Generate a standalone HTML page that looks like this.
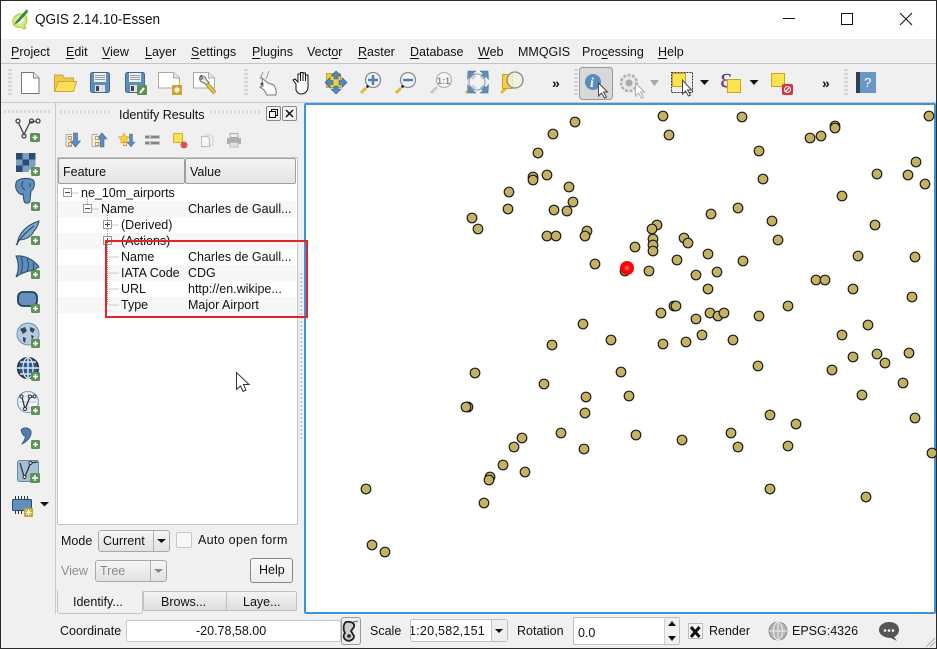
<!DOCTYPE html>
<html><head><meta charset="utf-8"><style>
html,body{margin:0;padding:0}
body{width:937px;height:649px;overflow:hidden;position:relative;background:#f0f0f0;font:12.5px "Liberation Sans",sans-serif;color:#111}
.t{position:absolute;white-space:nowrap;line-height:16px}
.b{position:absolute;box-sizing:border-box}
u{text-decoration-thickness:1px;text-underline-offset:2px}
.r{position:absolute;left:58px;width:238px;height:16px}
.btn{position:absolute;box-sizing:border-box;border:1px solid #a8a8a8;border-radius:3px;background:linear-gradient(#f6f6f6,#e2e2e2)}
svg{position:absolute;left:0;top:0}
</style></head><body>
<div class="b" style="left:0;top:0;width:937px;height:39px;background:#fff"></div>
<div class="t" style="left:35px;top:11px;font-size:14.5px;line-height:18px;transform:scaleX(.935);transform-origin:0 0">QGIS 2.14.10-Essen</div>
<div class="t" style="left:11px;top:44px"><u>P</u>roject</div>
<div class="t" style="left:66px;top:44px"><u>E</u>dit</div>
<div class="t" style="left:102px;top:44px"><u>V</u>iew</div>
<div class="t" style="left:145px;top:44px"><u>L</u>ayer</div>
<div class="t" style="left:191px;top:44px"><u>S</u>ettings</div>
<div class="t" style="left:252px;top:44px"><u>P</u>lugins</div>
<div class="t" style="left:307px;top:44px">Vect<u>o</u>r</div>
<div class="t" style="left:358px;top:44px"><u>R</u>aster</div>
<div class="t" style="left:410px;top:44px"><u>D</u>atabase</div>
<div class="t" style="left:478px;top:44px"><u>W</u>eb</div>
<div class="t" style="left:518px;top:44px">MMQGIS</div>
<div class="t" style="left:582px;top:44px">Pro<u>c</u>essing</div>
<div class="t" style="left:658px;top:44px"><u>H</u>elp</div>
<div class="b" style="left:0;top:63px;width:937px;height:1px;background:#c4c4c4"></div>
<div class="b" style="left:0;top:102px;width:937px;height:1px;background:#c8c8c8"></div>
<div class="b" style="left:55px;top:103px;width:1px;height:511px;background:#cacaca"></div>

<!-- dock -->
<div class="t" style="left:119px;top:107px">Identify Results</div>
<div class="b" style="left:266px;top:106px;width:15px;height:15px;border:1px solid #888;border-radius:2px;background:#f4f4f4"></div>
<div class="b" style="left:282px;top:106px;width:15px;height:15px;border:1px solid #888;border-radius:2px;background:#f4f4f4"></div>
<div class="b" style="left:57px;top:157px;width:241px;height:368px;background:#fff;border:1px solid #c4c4c4;border-radius:2px"></div>
<div class="b" style="left:58px;top:158px;width:127px;height:26px;background:linear-gradient(#f4f4f4,#e4e4e4);border:1px solid #a0a0a0;border-radius:2px"></div>
<div class="b" style="left:185px;top:158px;width:111px;height:26px;background:linear-gradient(#f4f4f4,#e4e4e4);border:1px solid #a0a0a0;border-radius:2px"></div>
<div class="t" style="left:63px;top:164px">Feature</div>
<div class="t" style="left:190px;top:164px">Value</div>
<div class="r" style="top:201px;background:#f7f7f7"></div>
<div class="r" style="top:233px;background:#f7f7f7"></div>
<div class="r" style="top:265px;background:#f7f7f7"></div>
<div class="r" style="top:297px;background:#f7f7f7"></div>
<div class="t" style="left:81px;top:185px">ne_10m_airports</div>
<div class="t" style="left:101px;top:201px">Name</div>
<div class="t" style="left:188px;top:201px">Charles de Gaull...</div>
<div class="t" style="left:121px;top:217px">(Derived)</div>
<div class="t" style="left:121px;top:233px">(Actions)</div>
<div class="t" style="left:121px;top:249px">Name</div>
<div class="t" style="left:188px;top:249px">Charles de Gaull...</div>
<div class="t" style="left:121px;top:265px">IATA Code</div>
<div class="t" style="left:188px;top:265px">CDG</div>
<div class="t" style="left:121px;top:281px">URL</div>
<div class="t" style="left:188px;top:281px">http://en.wikipe...</div>
<div class="t" style="left:121px;top:297px">Type</div>
<div class="t" style="left:188px;top:297px">Major Airport</div>

<div class="t" style="left:61px;top:533px">Mode</div>
<div class="btn" style="left:98px;top:530px;width:72px;height:22px"></div>
<div class="t" style="left:103px;top:533px">Current</div>
<div class="b" style="left:153px;top:531px;width:1px;height:20px;background:#b0b0b0"></div>
<div class="b" style="left:176px;top:532px;width:16px;height:16px;border:1px solid #c8c8c8;border-radius:2px;background:#f6f6f6"></div>
<div class="t" style="left:198px;top:532px;letter-spacing:.3px">Auto open form</div>
<div class="t" style="left:61px;top:563px;color:#8c8c8c">View</div>
<div class="btn" style="left:95px;top:560px;width:72px;height:22px"></div>
<div class="t" style="left:100px;top:563px;color:#8c8c8c">Tree</div>
<div class="b" style="left:150px;top:561px;width:1px;height:20px;background:#b0b0b0"></div>
<div class="btn" style="left:250px;top:558px;width:43px;height:25px;border-color:#888;background:linear-gradient(#f8f8f8,#ececec)"></div>
<div class="t" style="left:259px;top:562px">Help</div>
<div class="b" style="left:143px;top:591px;width:154px;height:20px;background:linear-gradient(#f4f4f4,#dedede);border:1px solid #c0c0c0;border-radius:2px"></div>
<div class="b" style="left:226px;top:591px;width:1px;height:20px;background:#c0c0c0"></div>
<div class="b" style="left:57px;top:590px;width:86px;height:24px;background:#f0f0f0;border:1px solid #c4c4c4;border-top:0;border-radius:0 0 3px 3px"></div>
<div class="t" style="left:73px;top:594px">Identify...</div>
<div class="t" style="left:161px;top:594px">Brows...</div>
<div class="t" style="left:243px;top:594px">Laye...</div>

<!-- map -->
<div class="b" style="left:304px;top:103px;width:632px;height:511px;background:#fff;border:2px solid #3d93e0;border-radius:2px"></div>

<!-- status -->
<div class="t" style="left:60px;top:623px">Coordinate</div>
<div class="b" style="left:126px;top:620px;width:215px;height:22px;background:#fff;border:1px solid #c8c8c8;border-radius:2px"></div>
<div class="t" style="left:196px;top:623px">-20.78,58.00</div>
<div class="b" style="left:341px;top:617px;width:20px;height:28px;background:#eee;border:1px solid #999;border-radius:3px"></div>
<div class="t" style="left:370px;top:623px">Scale</div>
<div class="btn" style="left:410px;top:619px;width:98px;height:23px;background:#fff;border-color:#c0c0c0"></div>
<div class="b" style="left:411px;top:620px;width:80px;height:21px;overflow:hidden"><div class="t" style="left:-2px;top:3px;letter-spacing:.25px">1:20,582,151</div></div>
<div class="b" style="left:491px;top:620px;width:16px;height:21px;background:#eee;border-left:1px solid #c0c0c0"></div>
<div class="t" style="left:517px;top:623px">Rotation</div>
<div class="b" style="left:573px;top:617px;width:107px;height:28px;background:#fff;border:1px solid #c0c0c0;border-radius:2px"></div>
<div class="t" style="left:578px;top:625px">0.0</div>
<div class="b" style="left:664px;top:618px;width:15px;height:26px;background:#f0f0f0;border-left:1px solid #d0d0d0"></div>
<div class="t" style="left:709px;top:623px">Render</div>
<div class="t" style="left:792px;top:623px">EPSG:4326</div>

<svg width="937" height="649" viewBox="0 0 937 649">
<!-- logo -->
<path d="M19 14c4-1 8 1 8 6 0 3-1 5-3 6l2 2-2 1-3-2c-3 1-7 0-8-4-1-4 2-8 6-9z" fill="#d6e77f" stroke="#a9c640"/><circle cx="20" cy="20" r="3.500" fill="#fff"/><path d="M27 9l-10 11-3 5 5-3 9-10z" fill="#2e8b3a"/>
<!-- window buttons -->
<path d="M783 18.500h12" stroke="#111" fill="none"/><rect x="841.500" y="13.500" width="11" height="11" fill="none" stroke="#111"/><path d="M900 13l12 12M912 13l-12 12" stroke="#111" fill="none"/>
<!-- grips -->
<g stroke="#d0d0d0" stroke-dasharray="2 2" fill="none" stroke-width="3.500"><path d="M10 69v28M246 69v28M576 69v28M846 69v28"/></g>
<path d="M301 273v167" stroke="#d0d0d0" stroke-dasharray="2 2" fill="none" stroke-width="3"/>
<g stroke="#d8d8d8" stroke-dasharray="2 2" fill="none" stroke-width="3"><path d="M4 111.500h48M60 112h52M210 112h52"/></g>
<!-- top toolbar -->
<path d="M21.500 72.500h12l5.500 5.500v15.500H21.500z" fill="#fff" stroke="#777"/><path d="M33.500 72.500v5.500h5.500" fill="#e6e6e6" stroke="#888"/>
<path d="M54.500 91.500V75h8l2 3h9v4" fill="#eec94a" stroke="#cfa62e"/><path d="M54.500 91.500l4-10h18l-3 10z" fill="#fddf5c" stroke="#cfa62e"/>
<rect x="90.500" y="72.500" width="19" height="20" rx="2" fill="#5d8dbd" stroke="#3d6a96"/><rect x="94" y="73" width="12" height="9" fill="#f2f2f2"/><path d="M95 75.500h10M95 77.500h10M95 79.500h10" stroke="#999"/><rect x="95" y="85" width="10" height="7" fill="#e0e0e0"/><rect x="96" y="86" width="3" height="5" fill="#445"/>
<rect x="125.500" y="72.500" width="19" height="20" rx="2" fill="#5d8dbd" stroke="#3d6a96"/><rect x="129" y="73" width="12" height="9" fill="#f2f2f2"/><path d="M130 75.500h10M130 77.500h10M130 79.500h10" stroke="#999"/><rect x="130" y="85" width="8" height="7" fill="#e0e0e0"/><rect x="131" y="86" width="3" height="5" fill="#445"/><rect x="137" y="85" width="10" height="10" rx="1" fill="#5d9157"/><path d="M140 93l4-5" stroke="#fff" stroke-width="2"/>
<path d="M158.500 72.500h15l6 5.500v10h-21z" fill="#fff" stroke="#aaa"/><path d="M173.500 72.500v5.500h6" fill="#e6e6e6" stroke="#aaa"/><rect x="172" y="85" width="10" height="10" rx="1" fill="#c9a227"/><path d="M177 86.500v7M173.500 90h7M175 88l4 4M179 88l-4 4" stroke="#fff"/>
<path d="M193.500 72.500h15l6 5.500v10h-21z" fill="#fff" stroke="#aaa"/><path d="M208.500 72.500v5.500h6" fill="#e6e6e6" stroke="#aaa"/><path d="M201 75.500a4 4 0 0 0 2 7l3 2 3-2-3-3c0-2-2-4-5-4l2 3-2 1z" fill="#e8e8e8" stroke="#666"/><path d="M207 84l8 9" stroke="#b08a25" stroke-width="4"/><path d="M207 84l8 9" stroke="#eccb55" stroke-width="2"/>
<path d="M263 72l-3 7M269 71l-3 8" stroke="#999" fill="none"/><path d="M262 78l6 5 6 2 2 5v5h-9l-3-5-4-3 3-1z" fill="#fff" stroke="#777"/><circle cx="262" cy="84" r="1.500" fill="#555"/>
<path d="M296 84l-3-4 2-1 3 3V74h2.500v7-8.500h2.500v8.500-8h2.500v8-6h2.500v12c0 4-3 7-7 7-3 0-4-2-5-4z" fill="#fff" stroke="#111"/>
<rect x="326.500" y="73.500" width="14" height="14" fill="#f5cf3d" stroke="#c9a227"/><path d="M336 71l5 5h-3v3h-4v-3h-3zM336 94l5-5h-3v-3h-4v3h-3zM325 82.500l5-5v3h3v4h-3v3zM347 82.500l-5-5v3h-3v4h3v3z" fill="#5588bb" stroke="#2f5f8f" stroke-width=".6"/>
<g stroke="#8a8a8a" stroke-width="1.300"><circle cx="373" cy="80" r="7.500" fill="#f0f4f8"/><circle cx="408" cy="80" r="7.500" fill="#f0f4f8"/><circle cx="444" cy="80" r="7.500" fill="#f6f6f6" stroke="#b4b4b4"/></g>
<path d="M373 75v10M368 80h10M403 80h10" stroke="#4d7fb0" stroke-width="2.500"/>
<g stroke="#e2b934" stroke-width="3"><path d="M361 93l5-5M396 93l5-5M466 93l5-5M501 93l5-5"/></g>
<path d="M431 93l6-6" stroke="#c8c8c8" stroke-width="3"/><g fill="#111"><circle cx="367.500" cy="86.500" r="1.300"/><circle cx="402.500" cy="86.500" r="1.300"/><circle cx="472" cy="87" r="1.300"/><circle cx="507" cy="87" r="1.300"/></g>
<text x="437" y="84" font-size="9" fill="#888" font-family="Liberation Sans" font-weight="bold">1:1</text>
<path d="M468 71h8l-3 2.500 3 3-3 3-3-3-2.500 3zM488 71h-8l3 2.500-3 3 3 3 3-3 2.500 3zM468 93h8l-3-2.500 3-3-3-3-3 3-2.500-3zM488 93h-8l3-2.500-3-3 3-3 3 3 2.500-3z" fill="#5d8dbd" stroke="#3d6a96" stroke-width=".5"/>
<circle cx="477" cy="82" r="8" fill="#f2f2f2" fill-opacity=".7" stroke="#999"/>
<rect x="502.500" y="74.500" width="10" height="14" fill="#f5cf3d" stroke="#c9a227"/><circle cx="515" cy="80" r="8" fill="#f4f1da" fill-opacity=".85" stroke="#8a8a8a" stroke-width="1.300"/>
<text x="552" y="88" font-size="14" font-weight="bold" font-family="Liberation Sans" fill="#111">»</text>
<text x="822" y="88" font-size="14" font-weight="bold" font-family="Liberation Sans" fill="#111">»</text>
<rect x="579.500" y="67.500" width="33" height="32" rx="3" fill="#d8d8d8" stroke="#999"/>
<circle cx="593" cy="82" r="8" fill="#5a8bc0"/><text x="590" y="87" font-size="14" font-style="italic" font-weight="bold" fill="#fff" font-family="Liberation Serif">i</text>
<path d="M598.500 83v13l3-3 3 5 2-1-3-5h4z" fill="#fff" stroke="#444"/>
<circle cx="629" cy="83" r="8" fill="#e8e8e8" stroke="#b0b0b0" stroke-width="2.500" stroke-dasharray="3 1.500"/><circle cx="629" cy="83" r="3.500" fill="#aaa"/><path d="M635.500 83v13l3-3 3 5 2-1-3-5h4z" fill="#fff" stroke="#aaa"/>
<path d="M650 80h9l-4.500 6z" fill="#a8a8a8"/>
<rect x="671.500" y="72.500" width="21" height="20" fill="none" stroke="#333" stroke-dasharray="2 1"/><rect x="672.500" y="73.500" width="13" height="13" fill="#fde44e" stroke="#c9a227"/><path d="M682.500 80v14l3-3 3 5 2-1-3-5h4z" fill="#fff" stroke="#444"/>
<path d="M700 80h9l-4.500 5zM749.500 80h9l-4.500 5z" fill="#111"/>
<text x="720" y="87" font-size="28" fill="#6b3b7e" font-family="Liberation Serif">ε</text>
<rect x="727.500" y="79.500" width="13" height="13" fill="#fde44e" stroke="#c9a227"/>
<rect x="771.500" y="73.500" width="13" height="13" fill="#fde44e" stroke="#c9a227"/><rect x="782" y="84" width="11" height="11" rx="2" fill="#d9343a"/><path d="M785 92l5-5" stroke="#fff" stroke-width="1.300"/><circle cx="787.500" cy="89.500" r="3" fill="none" stroke="#fff"/>
<rect x="856" y="72" width="20" height="21" rx="1" fill="#6a96c4"/><rect x="856" y="72" width="4" height="21" fill="#2f3f50"/><text x="864" y="87" font-size="13" fill="#fff" font-family="Liberation Sans">?</text>
<!-- left toolbar -->
<g fill="none" stroke="#444" stroke-width="1.300"><path d="M18.500 123l5.500 11.500 6-12.500 6-.5"/><circle cx="18" cy="121" r="2"/><circle cx="24" cy="136" r="2"/><circle cx="31.500" cy="121" r="2"/><circle cx="38" cy="121" r="2"/></g>
<g fill="#2d4b70"><rect x="16" y="153" width="6.500" height="6.500"/><rect x="29" y="153" width="6.500" height="6.500"/><rect x="22.500" y="159.500" width="6.500" height="6"/><rect x="16" y="165.500" width="6.500" height="6.500"/></g><g fill="#7f9fbe"><rect x="22.500" y="153" width="6.500" height="6.500"/><rect x="16" y="159.500" width="6.500" height="6"/><rect x="29" y="159.500" width="6.500" height="6"/><rect x="22.500" y="165.500" width="6.500" height="6.500"/><rect x="29" y="165.500" width="6" height="4"/></g>
<path d="M21 179c4-1 11-1 13 2 1 4 0 8-3 10l-1 10c-1 3-5 3-6 0l-1-7c-2 1-4 0-5-2-2-2-3-5-2-9 0-2 2-3 5-4z" fill="#5f8fbe" stroke="#2c4a6a"/><path d="M23 181c-2 4-1 7 2 9M30 183v4" stroke="#2c4a6a" fill="none"/>
<path d="M17 245c1-11 9-20 22-24-1 5-3 8-5 10-2 5-8 9-15 9z" fill="#7ea4c6" stroke="#2c4a6a"/><path d="M16 245c5-8 10-13 18-19" stroke="#2c4a6a" fill="none"/>
<path d="M16 256c9-1 18 4 23 11l-5 3c-6 1-13 3-18 7 3-7 3-14 0-21z" fill="#5d8dbd" stroke="#2c4a6a"/><path d="M21 256c2 6 2 11 0 17M27 259c2 4 2 7 0 12M33 263c1 2 1 4 0 7" stroke="#2c4a6a" fill="none"/>
<rect x="18" y="292" width="19" height="14" rx="5" fill="#6790bd" stroke="#24405f" stroke-width="1.800"/>
<circle cx="28" cy="334" r="11" fill="#b5cbe0" stroke="#6a93bb"/>
<path d="M20 329l5-2 2 4-4 3zM30 327l5 2-2 4-3-2zM23 337l3 1-1 5-2-2zM31 335l3 1-2 4z" fill="#38475a"/>
<circle cx="28" cy="368" r="10.500" fill="#2d5a8a" stroke="#222" stroke-width="1.300"/>
<path d="M17 368h22M28 357v22M20 362h16M20 374h16" stroke="#dde8f2" stroke-width="1.500" fill="none"/><ellipse cx="28" cy="368" rx="5" ry="10.500" fill="none" stroke="#dde8f2" stroke-width="1.200"/>
<circle cx="28" cy="402" r="10.500" fill="#eff5fa" stroke="#6a93bb"/><path d="M17 402h22M28 391v22M20 396h16M20 408h16" stroke="#b5cde3" fill="none"/><path d="M22 397l3 12 5-12 5 0" fill="none" stroke="#333" stroke-width="1.300"/><g fill="#fff" stroke="#333"><circle cx="21.500" cy="396.500" r="1.500"/><circle cx="25" cy="409" r="1.500"/><circle cx="30" cy="396.500" r="1.500"/><circle cx="34.500" cy="396.500" r="1.500"/></g>
<path d="M21 430c2-3 8-3 10 1 1 5-3 10-9 13 2-3 4-6 3-8-2 0-3-2-4-6z" fill="#4d7fb0" stroke="#2c4a6a" stroke-width=".7"/>
<rect x="17.500" y="460.500" width="21" height="21" rx="2" fill="#a6bfd6" stroke="#6a8aa8"/><path d="M20 463l4.500 15 6-15 7-1" fill="none" stroke="#333" stroke-width="1.300"/><circle cx="24.500" cy="477" r="1.500" fill="#fff" stroke="#333"/><circle cx="30.500" cy="463" r="1.500" fill="#fff" stroke="#333"/>
<rect x="12.500" y="499.500" width="19" height="11" rx="1" fill="#5f8fbe" stroke="#2c4a6a"/><path d="M15.500 496v3M18.500 496v3M21.500 496v3M24.500 496v3M27.500 496v3M15.500 511v3M18.500 511v3M21.500 511v3" stroke="#333"/><rect x="24" y="508" width="9" height="9" rx="1" fill="#c9a227"/><path d="M28.500 509v7M25 512.500h7M26 510l5 5M31 510l-5 5" stroke="#fff" stroke-width=".8"/><path d="M40 502h9l-4.500 4.500z" fill="#111"/>
<g fill="#5d9157"><rect x="30" y="133" width="10" height="9" rx="1.500"/><rect x="31" y="167" width="9" height="9" rx="1.500"/><rect x="31" y="202" width="9" height="9" rx="1.500"/><rect x="31" y="236" width="9" height="9" rx="1.500"/><rect x="31" y="270" width="9" height="9" rx="1.500"/><rect x="31" y="304" width="9" height="9" rx="1.500"/><rect x="31" y="339" width="9" height="9" rx="1.500"/><rect x="31" y="372" width="9" height="9" rx="1.500"/><rect x="31" y="406" width="9" height="9" rx="1.500"/><rect x="31" y="440" width="9" height="9" rx="1.500"/><rect x="30" y="473" width="10" height="10" rx="1.500"/></g>
<path d="M35 135v5M32.500 137.500h5M35.500 169v5M33 171.500h5M35.500 204v5M33 206.500h5M35.500 238v5M33 240.500h5M35.500 272v5M33 274.500h5M35.500 306v5M33 308.500h5M35.500 341v5M33 343.500h5M35.500 374v5M33 376.500h5M35.500 408v5M33 410.500h5M35.500 442v5M33 444.500h5M35 475v6M32 478h6" stroke="#fff" stroke-width="1.500"/>
<!-- dock buttons -->
<rect x="271.500" y="109.500" width="6" height="6" fill="none" stroke="#111"/><rect x="269.500" y="111.500" width="6" height="6" fill="#f4f4f4" stroke="#111"/><path d="M286 110l7 7M293 110l-7 7" stroke="#111" stroke-width="1.500"/>
<!-- identify toolbar -->
<path d="M66 134.500h6M66 146.500h6M66 134.500v12M92 134.500h6M92 146.500h6M92 134.500v12" stroke="#aaa" fill="none"/>
<path d="M73.500 133h4v8h3l-5 6-5-6h3zM100 147h4v-8h3l-5-6-5 6h3z" fill="#5d8dbd" stroke="#3d6a96" stroke-width=".6"/>
<g fill="#f3f3f3" stroke="#e0952c"><rect x="68.500" y="136.500" width="3" height="3"/><rect x="68.500" y="142.500" width="3" height="3"/><rect x="95.500" y="136.500" width="3" height="3"/><rect x="95.500" y="142.500" width="3" height="3"/><rect x="123.500" y="142.500" width="3" height="3"/></g>
<path d="M124 133l1.800 3.200 3.600.7-2.500 2.600.4 3.600-3.300-1.500-3.300 1.500.4-3.600-2.500-2.600 3.600-.7z" fill="#f5cf3d" stroke="#d8a92a" stroke-width=".6"/><path d="M129.500 134h3v8h2.500l-4 5-4-5h2.500z" fill="#5d8dbd" stroke="#3d6a96" stroke-width=".5"/>
<rect x="145" y="135" width="15" height="4" fill="#c2c2c2"/><rect x="145" y="141" width="15" height="4" fill="#c2c2c2"/><path d="M145 137h4M151 137h8M145 143h4M151 143h8" stroke="#444"/>
<rect x="173.500" y="133.500" width="9" height="9" rx="1" fill="#fde44e" stroke="#d1ad2c"/><circle cx="184" cy="145" r="3.500" fill="#d9545a"/>
<path d="M205 135h6l2 2v8h-8z" fill="#f0f0f0" stroke="#d0d0d0"/><path d="M201.500 136.500h6l2 2v8h-8z" fill="#f6f6f6" stroke="#bbb"/><path d="M227 138h14v6h-14z" fill="#aeaeae"/><path d="M230 133.500h8v4h-8z" fill="#ececec" stroke="#aaa"/><path d="M230 142.500h8v4.500h-8z" fill="#e4e4e4" stroke="#bbb"/>
<!-- tree lines -->
<g stroke="#9a9a9a" stroke-dasharray="1 1" fill="none"><path d="M67.500 193h12M87.500 209h12M107.500 225h12M107.500 241h12M107.500 257h12M107.500 273h12M107.500 289h12M107.500 305h12M107.500 213v92M87.500 197v12"/></g>
<g fill="#fff" stroke="#999"><rect x="63.500" y="188.500" width="8" height="8"/><rect x="83.500" y="204.500" width="8" height="8"/><rect x="103.500" y="220.500" width="8" height="8"/><rect x="103.500" y="236.500" width="8" height="8"/></g>
<path d="M65 192.500h5M85 208.500h5M105 224.500h5M107.500 222v5M105 240.500h5M107.500 238v5" stroke="#444"/>
<!-- red box -->
<rect x="106" y="241" width="201" height="76" fill="none" stroke="#e4242b" stroke-width="2"/>
<!-- cursor -->
<path d="M236.500 372.500v17l4-3.500 2.500 5.500 3-1.500-2.500-5.500h5.500z" fill="#fff" stroke="#333"/>
<!-- combos -->
<path d="M157 539h9l-4.500 4z" fill="#111"/><path d="M154 569h9l-4.500 4z" fill="#888"/>
<!-- status icons -->
<path d="M346 622c5-1 9 1 8 5l-3 4 3 5c0 4-5 6-8 4-3-2-3-5-1-7-2-3-2-9 1-11z" fill="#ccc" stroke="#222" stroke-width="1.800"/><path d="M353 622l5-1" stroke="#666"/><circle cx="349" cy="636" r="1.800" fill="#222"/>
<path d="M495 629h8l-4 4z" fill="#111"/><path d="M668 626h8l-4-5zM668 636h8l-4 5z" fill="#111"/>
<rect x="688.500" y="623.500" width="14" height="15" fill="#f8f8f8" stroke="#bbb"/><path d="M691 627l8.500 10M699.500 627l-8.500 10" stroke="#111" stroke-width="3"/>
<circle cx="778" cy="631" r="9" fill="#b4b4b4" stroke="#8a8a8a"/><path d="M769 631h18M778 622v18" stroke="#eee"/><ellipse cx="778" cy="631" rx="4.500" ry="9" fill="none" stroke="#eee"/>
<path d="M889 622c6 0 10 3 10 8 0 3-2 6-5 7l3 4-6-3c-6 0-12-3-12-8s5-8 10-8z" fill="#555"/><circle cx="885" cy="630.500" r="1.300" fill="#fff"/><circle cx="889" cy="630.500" r="1.300" fill="#fff"/><circle cx="893" cy="630.500" r="1.300" fill="#fff"/>
<path d="M926 647l9-9M930 647l5-5" stroke="#aaa"/>
<!-- map points -->
<g fill="#c4b262" stroke="#1c1c1c" stroke-width="1.200">
<circle cx="663" cy="116" r="4.800"/><circle cx="742" cy="117" r="4.800"/><circle cx="929" cy="116" r="4.800"/><circle cx="575" cy="122" r="4.800"/><circle cx="553" cy="134" r="4.800"/><circle cx="669" cy="135" r="4.800"/><circle cx="835" cy="126" r="4.800"/><circle cx="835" cy="128" r="4.800"/><circle cx="821" cy="136" r="4.800"/><circle cx="810" cy="138" r="4.800"/><circle cx="759" cy="151" r="4.800"/><circle cx="538" cy="153" r="4.800"/><circle cx="916" cy="162" r="4.800"/><circle cx="763" cy="179" r="4.800"/><circle cx="533" cy="177" r="4.800"/><circle cx="547" cy="175" r="4.800"/><circle cx="533" cy="180" r="4.800"/><circle cx="877" cy="174" r="4.800"/><circle cx="908" cy="175" r="4.800"/><circle cx="925" cy="184" r="4.800"/><circle cx="569" cy="187" r="4.800"/><circle cx="509" cy="192" r="4.800"/><circle cx="842" cy="196" r="4.800"/><circle cx="573" cy="202" r="4.800"/><circle cx="508" cy="209" r="4.800"/><circle cx="554" cy="210" r="4.800"/><circle cx="567" cy="211" r="4.800"/><circle cx="711" cy="214" r="4.800"/><circle cx="738" cy="208" r="4.800"/><circle cx="472" cy="218" r="4.800"/><circle cx="478" cy="229" r="4.800"/><circle cx="657" cy="225" r="4.800"/><circle cx="652" cy="229" r="4.800"/><circle cx="772" cy="221" r="4.800"/><circle cx="875" cy="225" r="4.800"/><circle cx="587" cy="231" r="4.800"/><circle cx="585" cy="236" r="4.800"/><circle cx="547" cy="236" r="4.800"/><circle cx="556" cy="236" r="4.800"/><circle cx="653" cy="239" r="4.800"/><circle cx="653" cy="245" r="4.800"/><circle cx="653" cy="251" r="4.800"/><circle cx="684" cy="238" r="4.800"/><circle cx="688" cy="243" r="4.800"/><circle cx="778" cy="240" r="4.800"/><circle cx="635" cy="247" r="4.800"/><circle cx="858" cy="256" r="4.800"/><circle cx="915" cy="257" r="4.800"/><circle cx="708" cy="254" r="4.800"/><circle cx="595" cy="264" r="4.800"/><circle cx="677" cy="260" r="4.800"/><circle cx="743" cy="261" r="4.800"/><circle cx="625" cy="271" r="4.800"/><circle cx="649" cy="271" r="4.800"/><circle cx="696" cy="275" r="4.800"/><circle cx="717" cy="272" r="4.800"/><circle cx="816" cy="280" r="4.800"/><circle cx="825" cy="280" r="4.800"/><circle cx="708" cy="289" r="4.800"/><circle cx="853" cy="289" r="4.800"/><circle cx="912" cy="297" r="4.800"/><circle cx="674" cy="306" r="4.800"/><circle cx="676" cy="306" r="4.800"/><circle cx="661" cy="313" r="4.800"/><circle cx="696" cy="319" r="4.800"/><circle cx="710" cy="313" r="4.800"/><circle cx="718" cy="316" r="4.800"/><circle cx="724" cy="313" r="4.800"/><circle cx="759" cy="316" r="4.800"/><circle cx="788" cy="306" r="4.800"/><circle cx="583" cy="324" r="4.800"/><circle cx="868" cy="325" r="4.800"/><circle cx="702" cy="335" r="4.800"/><circle cx="733" cy="340" r="4.800"/><circle cx="611" cy="340" r="4.800"/><circle cx="552" cy="345" r="4.800"/><circle cx="663" cy="344" r="4.800"/><circle cx="686" cy="342" r="4.800"/><circle cx="842" cy="335" r="4.800"/><circle cx="853" cy="357" r="4.800"/><circle cx="877" cy="354" r="4.800"/><circle cx="909" cy="353" r="4.800"/><circle cx="885" cy="363" r="4.800"/><circle cx="758" cy="366" r="4.800"/><circle cx="832" cy="370" r="4.800"/><circle cx="475" cy="373" r="4.800"/><circle cx="621" cy="372" r="4.800"/><circle cx="544" cy="384" r="4.800"/><circle cx="903" cy="383" r="4.800"/><circle cx="586" cy="397" r="4.800"/><circle cx="629" cy="396" r="4.800"/><circle cx="862" cy="395" r="4.800"/><circle cx="468" cy="407" r="4.800"/><circle cx="466" cy="407" r="4.800"/><circle cx="585" cy="413" r="4.800"/><circle cx="770" cy="415" r="4.800"/><circle cx="796" cy="424" r="4.800"/><circle cx="915" cy="418" r="4.800"/><circle cx="561" cy="433" r="4.800"/><circle cx="636" cy="435" r="4.800"/><circle cx="682" cy="440" r="4.800"/><circle cx="731" cy="433" r="4.800"/><circle cx="738" cy="447" r="4.800"/><circle cx="788" cy="446" r="4.800"/><circle cx="584" cy="449" r="4.800"/><circle cx="522" cy="438" r="4.800"/><circle cx="514" cy="447" r="4.800"/><circle cx="932" cy="453" r="4.800"/><circle cx="503" cy="465" r="4.800"/><circle cx="525" cy="472" r="4.800"/><circle cx="490" cy="477" r="4.800"/><circle cx="489" cy="480" r="4.800"/><circle cx="366" cy="489" r="4.800"/><circle cx="770" cy="489" r="4.800"/><circle cx="866" cy="497" r="4.800"/><circle cx="484" cy="503" r="4.800"/><circle cx="372" cy="545" r="4.800"/><circle cx="385" cy="552" r="4.800"/>
</g>
<circle cx="627" cy="268" r="7" fill="#fb0606"/><circle cx="627" cy="268" r="2.500" fill="#f04a3a"/>
<rect x="0.500" y="0.500" width="936" height="648" fill="none" stroke="#2a2a2a"/>
</svg>
</body></html>
